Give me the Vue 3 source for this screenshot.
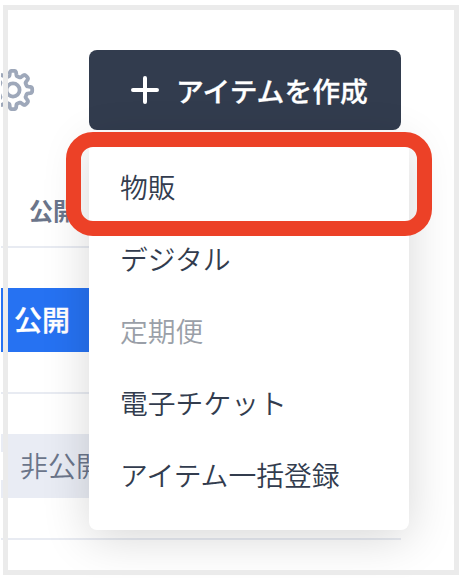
<template>
  <div class="screen">
    <div class="page">
      <header class="toolbar">
        <svg class="gear" viewBox="-24 -24 48 48" fill="none" stroke="#9ea8ba" stroke-width="3.8" stroke-linejoin="round">
          <path :d="gearPath" />
          <circle r="6.6" />
        </svg>
        <button class="create-btn">
          <svg class="plus" viewBox="0 0 28 28" fill="none" stroke="#fff" stroke-width="4" stroke-linecap="round">
            <path d="M14 2V26M2 14H26" />
          </svg>
          <span>アイテムを作成</span>
        </button>
      </header>

      <div class="table">
        <div class="table-head">公開</div>
        <div class="table-row">
          <div class="status open">公開</div>
        </div>
        <div class="table-row">
          <div class="status closed">非公開</div>
        </div>
      </div>
    </div>

    <ul class="menu">
      <li v-for="item in items" :key="item.label" :class="{ disabled: item.disabled }">{{ item.label }}</li>
    </ul>

    <div class="frame"></div>
    <div class="highlight"></div>
  </div>
</template>

<script setup>
const items = [
  { label: '物販' },
  { label: 'デジタル' },
  { label: '定期便', disabled: true },
  { label: '電子チケット' },
  { label: 'アイテム一括登録' },
];

// Eight rounded teeth around the centre
const points = [];
for (let i = 0; i < 240; i++) {
  const a = (i / 240) * Math.PI * 2;
  const r = 16.7 + 2.5 * Math.tanh(2.6 * Math.cos(8 * a)) / Math.tanh(2.6);
  points.push(`${(r * Math.cos(a)).toFixed(2)} ${(r * Math.sin(a)).toFixed(2)}`);
}
const gearPath = `M${points.join('L')}Z`;
</script>

<style>
body { background: #fff; }
</style>

<style scoped>
.screen { position: relative; width: 460px; height: 578px; overflow: hidden; background: #fff; font-family: "Noto Sans CJK JP", sans-serif; font-size: 28px; color: #323c4e; }
.page { margin-left: 1px; width: 400px; overflow: hidden; }
.toolbar { display: flex; align-items: center; height: 80px; padding-top: 50px; }
.gear { flex: none; width: 48px; height: 48px; margin-left: -12px; }
.create-btn { flex: none; display: flex; align-items: center; gap: 17px; width: 312px; height: 80px; margin-left: 52px; padding: 0 0 0 42px; border: none; border-radius: 8px; background: #323c4e; color: #fff; font-family: inherit; font-size: 27.8px; font-weight: 500; line-height: 40px; white-space: nowrap; -webkit-text-stroke: 0.3px #fff; }
.plus { flex: none; width: 28px; height: 28px; }
.table-head { box-sizing: border-box; height: 118px; padding: 63px 0 0 28px; border-bottom: 2px solid #e8ebf2; color: #6b758a; font-size: 24px; font-weight: 700; line-height: 34px; }
.table-row { box-sizing: border-box; height: 146px; padding-top: 40px; border-bottom: 2px solid #e8ebf2; }
.status { box-sizing: border-box; width: 180px; height: 64px; line-height: 62px; }
.status.open { padding-left: 13px; background: #2672f2; color: #fff; font-weight: 500; -webkit-text-stroke: 0.3px #fff; }
.status.closed { padding-left: 19px; background: linear-gradient(#fff, #fff) 0 18px / 2px 28px no-repeat #e9ecf4; color: #6b758a; font-weight: 350; }
.menu { position: absolute; left: 89px; top: 138px; box-sizing: border-box; width: 320px; height: 392px; margin: 0; padding: 13px 31px; list-style: none; background: #fff; border-radius: 8px; box-shadow: 0 8px 48px rgba(0, 0, 0, 0.16); font-size: 27.8px; font-weight: 350; }
.menu li { height: 72px; line-height: 70px; white-space: nowrap; }
.menu li.disabled { color: #9a9fa8; }
.frame { position: absolute; left: 2.5px; top: 4.5px; box-sizing: border-box; width: 456px; height: 570px; border: 5px solid #ebebeb; }
.highlight { position: absolute; left: 65.5px; top: 131.5px; box-sizing: border-box; width: 366px; height: 104px; border: 15px solid #ec4127; border-radius: 27px; }
</style>
